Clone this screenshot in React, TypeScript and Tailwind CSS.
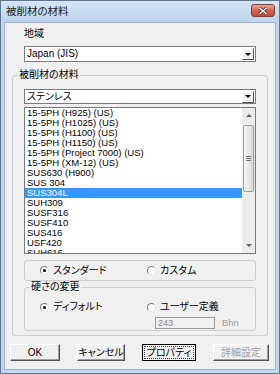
import React from 'react';

const materials = [
    '15-5PH (H925) (US)',
    '15-5PH (H1025) (US)',
    '15-5PH (H1100) (US)',
    '15-5PH (H1150) (US)',
    '15-5PH (Project 7000) (US)',
    '15-5PH (XM-12) (US)',
    'SUS630 (H900)',
    'SUS 304',
    'SUS304L',
    'SUH309',
    'SUSF316',
    'SUSF410',
    'SUS416',
    'USF420',
    'SUH616',
];

const Radio: React.FC<{ checked?: boolean; label: string }> = ({ checked, label }) => (
    <label className="flex items-center gap-[4px] h-[12px] leading-[12px]">
        <span className="w-[9px] h-[9px] rounded-full border border-t-[#7a7a7a] border-l-[#7a7a7a] border-b-[#e8e8e8] border-r-[#e8e8e8] bg-white flex items-center justify-center">
            {checked && <span className="w-[3px] h-[3px] rounded-full bg-black" />}
        </span>
        <span>{label}</span>
    </label>
);

const Combo: React.FC<{ value: string; className?: string }> = ({ value, className }) => (
    <div className={`flex items-center w-[232px] bg-white border border-[#7a7a7a] pl-[2px] pr-[1px] ${className ?? ''}`}>
        <span className="flex-1 leading-[12px]">{value}</span>
        <span className="w-[12px] h-[12px] bg-[#f0f0f0] border border-t-white border-l-white border-r-[#505050] border-b-[#505050] flex items-center justify-center">
            <span className="w-0 h-0 border-l-[3px] border-r-[3px] border-t-[3px] border-l-transparent border-r-transparent border-t-black" />
        </span>
    </div>
);

const Button: React.FC<{ label: string; w: string; primary?: boolean; disabled?: boolean }> = ({ label, w, primary, disabled }) => (
    <button
        className={`${w} h-[17px] flex items-center justify-center bg-[#f0f0f0] leading-[12px] ${
            primary ? 'border border-black' : 'border border-t-white border-l-white border-r-[#505050] border-b-[#505050] shadow-[inset_-1px_-1px_0_#a0a0a0]'
        } ${disabled ? 'text-[#a0a0a0]' : 'text-black'}`}
    >
        {primary ? (
            <span className="border border-dotted border-[#404040] px-[2px] leading-[11px]">{label}</span>
        ) : (
            label
        )}
    </button>
);

export default function App() {
    return (
        <div className="w-[280px] h-[374px] flex flex-col border border-[#5f7592] bg-[#c3d7ee] text-[10px] text-black font-['Liberation_Sans','Noto_Sans_CJK_JP',sans-serif] [font-feature-settings:'palt']">
            {/* タイトルバー */}
            <div className="h-[21px] flex items-start bg-gradient-to-b from-[#d6e5f6] to-[#bdd3ec] pl-[5px] pr-[4px]">
                <span className="flex-1 leading-[21px] text-[10.5px] text-[#1a1a1a]">被削材の材料</span>
                <span className="mt-[3px] w-[24px] h-[13px] rounded-[3px] border border-[#8a3a2e] bg-gradient-to-b from-[#e9a89c] via-[#d4624f] to-[#c24a36] flex items-center justify-center">
                    <svg width="10" height="8" viewBox="0 0 10 8">
                        <path d="M1.5 1 L8.5 7 M8.5 1 L1.5 7" stroke="#5a2a24" strokeWidth="3" />
                        <path d="M1.5 1 L8.5 7 M8.5 1 L1.5 7" stroke="#ffffff" strokeWidth="1.6" />
                    </svg>
                </span>
            </div>

            {/* 本体 */}
            <div className="flex-1 mx-[3px] mb-[3px] bg-[#f0f0f0] border border-[#9db3cc] flex flex-col">
                <div className="pl-[19px] pt-[5px] leading-[12px] h-[17px]">地域</div>
                <Combo value="Japan (JIS)" className="ml-[19px] mt-[6px] h-[16px]" />

                <fieldset className="ml-[7px] mt-[7px] w-[256px] border border-[#cfcfcf] rounded-[3px] pl-[11px] pr-[11px] pt-[8px] pb-[4px]">
                    <legend className="-ml-[6px] px-[1px] leading-[12px]">被削材の材料</legend>

                    <Combo value="ステンレス" className="h-[15px]" />

                    <div className="mt-[3px] h-[147px] w-[232px] border border-[#7a7a7a] bg-white flex">
                        <div className="flex-1 overflow-hidden">
                            {materials.map((m) => (
                                <div
                                    key={m}
                                    className={`h-[10px] leading-[10px] pl-[2px] text-[9.5px] whitespace-nowrap ${
                                        m === 'SUS304L' ? 'bg-[#3399ff] text-white' : ''
                                    }`}
                                >
                                    {m}
                                </div>
                            ))}
                        </div>
                        <div className="w-[13px] flex flex-col bg-[#ececec]">
                            <div className="h-[15px] flex items-center justify-center">
                                <span className="w-0 h-0 border-l-[3px] border-r-[3px] border-b-[3px] border-l-transparent border-r-transparent border-b-[#606060]" />
                            </div>
                            <div className="mt-[2px] mx-[1px] h-[67px] rounded-[2px] border border-[#9c9c9c] bg-gradient-to-r from-[#f6f6f6] to-[#dadada] flex flex-col items-center justify-center gap-[1px]">
                                <span className="w-[5px] h-[1px] bg-[#707070]" />
                                <span className="w-[5px] h-[1px] bg-[#707070]" />
                                <span className="w-[5px] h-[1px] bg-[#707070]" />
                            </div>
                            <div className="flex-1" />
                            <div className="h-[15px] flex items-center justify-center">
                                <span className="w-0 h-0 border-l-[3px] border-r-[3px] border-t-[3px] border-l-transparent border-r-transparent border-t-[#606060]" />
                            </div>
                        </div>
                    </div>

                    <div className="mt-[6px] h-[21px] w-[232px] border border-[#cfcfcf] rounded-[3px] flex items-center pl-[15px]">
                        <div className="w-[107px]">
                            <Radio checked label="スタンダード" />
                        </div>
                        <Radio label="カスタム" />
                    </div>

                    <fieldset className="w-[232px] border border-[#cfcfcf] rounded-[3px] pl-[15px] pt-[8px] pb-[1px]">
                        <legend className="-ml-[10px] px-[1px] leading-[12px]">硬さの変更</legend>
                        <div className="flex">
                            <div className="w-[107px]">
                                <Radio checked label="ディフォルト" />
                            </div>
                            <Radio label="ユーザー定義" />
                        </div>
                        <div className="mt-[4px] flex items-center">
                            <div className="ml-[115px] w-[60px] h-[12px] border border-[#9a9a9a] bg-[#f0f0f0] pl-[2px] leading-[10px] text-[9px] text-[#8c8c8c]">
                                243
                            </div>
                            <span className="ml-[7px] text-[9.5px] text-[#9c9c9c] leading-[12px]">Bhn</span>
                        </div>
                    </fieldset>
                </fieldset>

                <div className="mt-[8px] ml-[5px] flex gap-[17px]">
                    <Button label="OK" w="w-[50px]" />
                    <Button label="キャンセル" w="w-[48px]" />
                    <Button label="プロパティ" w="w-[54px]" primary />
                    <Button label="詳細設定" w="w-[56px]" disabled />
                </div>
            </div>
        </div>
    );
}
